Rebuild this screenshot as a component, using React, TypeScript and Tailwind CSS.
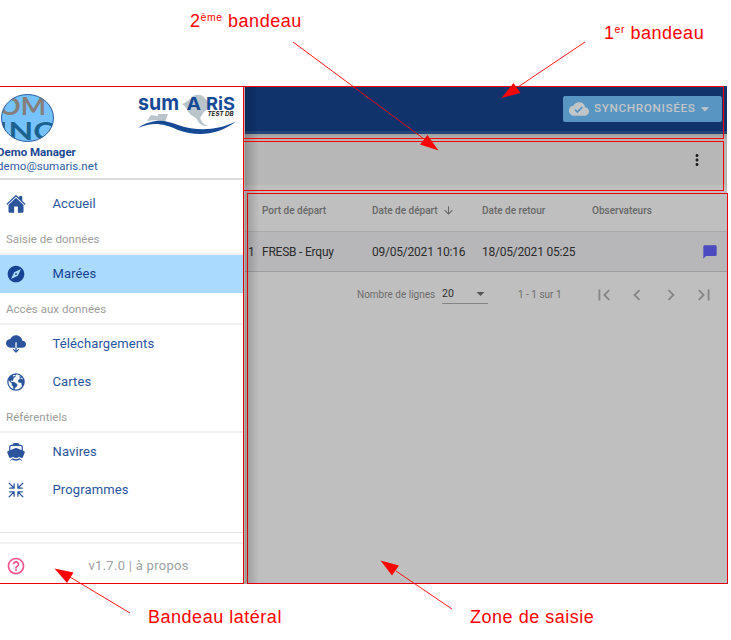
import type { ReactNode } from 'react';
import { IoHome, IoCloudDownload, IoEarth, IoBoat, IoContract } from 'react-icons/io5';
import {
  MdExplore, MdHelpOutline, MdCloudDone, MdArrowDropDown, MdMoreVert, MdArrowDownward,
  MdChatBubble, MdFirstPage, MdLastPage, MdChevronLeft, MdChevronRight,
} from 'react-icons/md';

function Item({ icon, label, active = false }: { icon: ReactNode; label: string; active?: boolean }) {
  return (
    <div className={`flex h-[38px] shrink-0 items-center pl-1.5 text-[20px] ${active ? 'bg-[#abdaff] text-[#164393]' : 'text-[#2a559d]'}`}>
      <span className="flex w-[46.5px]">{icon}</span>
      <span className="text-[13px] tracking-[0.12px]">{label}</span>
    </div>
  );
}

function Section({ label }: { label: string }) {
  return (
    <div className="flex h-8 shrink-0 items-center border-b-2 border-[#f1f1f1] pl-1.5 pt-[3px] text-[11.5px] tracking-[0.04px] text-[#9d9d9d]">
      {label}
    </div>
  );
}

function Avatar() {
  return (
    <svg width="56" height="52" viewBox="0 0 56 52" className="block overflow-visible">
      <defs><clipPath id="face"><ellipse cx="27.500" cy="26" rx="26" ry="23.5" /></clipPath></defs>
      <ellipse cx="27.500" cy="26" rx="26" ry="23.5" fill="#75c2ff" />
      <g clipPath="url(#face)" fontFamily="Lato, sans-serif" fontWeight="700" fontSize="25.500">
        <text x="-1" y="23" textLength="47" lengthAdjust="spacingAndGlyphs" fill="#857f7b">OM</text>
        <text x="8.500" y="47.500" textLength="46" lengthAdjust="spacingAndGlyphs" fill="#1b628f">NC</text>
        <path d="M2 30H5V46H2Z" fill="#31658a" />
      </g>
      <ellipse cx="27.500" cy="26" rx="26" ry="23.5" fill="none" stroke="#2a5b9c" />
    </svg>
  );
}

function Logo() {
  return (
    <svg width="100" height="42" viewBox="0 0 100 42" className="block overflow-visible">
      <path d="M44 12Q51 9 55 4Q61 1 66 5Q69 10 75 13Q71 15 66 20Q63 24 62 26Q65 34 70 33Q64 37 58 26Q50 22 49 17Q47 14 44 12Z" fill="#b9c5ca" />
      <path d="M9 29L13 23L20 24V22H30L27 30L18 28Z" fill="#b9c5ca" />
      <g fontFamily="Inter, sans-serif" fontWeight="700" fill="#164a96">
        <text x="0" y="17.500" fontSize="22" textLength="41" lengthAdjust="spacingAndGlyphs">sum</text>
        <text x="48.500" y="17.500" fontSize="17.500" textLength="14.500" lengthAdjust="spacingAndGlyphs">A</text>
        <text x="68" y="17.500" fontSize="17.500" textLength="29" lengthAdjust="spacingAndGlyphs">RiS</text>
      </g>
      <text x="69.500" y="24" fontFamily="Inter, sans-serif" fontWeight="700" fontStyle="italic" fontSize="6" fill="#222" textLength="26" lengthAdjust="spacingAndGlyphs">TEST DB</text>
      <path d="M0 36C16 26 26 28 40 33C61 40 80 38 98 29.500C80 43 60 45 40 38C24 31 15 30 0 36Z" fill="#164a96" />
    </svg>
  );
}

function Sidebar() {
  return (
    <aside className="flex w-[244px] shrink-0 flex-col bg-white">
      <header className="h-[94px] shrink-0 border-b-2 border-[#dcdcdc] pt-1.5">
        <div className="flex h-[53px] items-start justify-between pr-1.5">
          <Avatar />
          <Logo />
        </div>
        <div className="-ml-[3px] text-[11.5px] leading-[14px] text-[#1c4791]">
          <div className="font-bold">Demo Manager</div>
          <div className="tracking-[0.04px] text-[#2f5ca3]">demo@sumaris.net</div>
        </div>
      </header>
      <nav className="flex flex-1 flex-col pt-[5px]">
        <Item icon={<IoHome />} label="Accueil" />
        <Section label="Saisie de données" />
        <Item icon={<MdExplore />} label="Marées" active />
        <Section label="Accès aux données" />
        <Item icon={<IoCloudDownload />} label="Téléchargements" />
        <Item icon={<IoEarth />} label="Cartes" />
        <Section label="Référentiels" />
        <Item icon={<IoBoat />} label="Navires" />
        <Item icon={<IoContract />} label="Programmes" />
      </nav>
      <footer className="h-[52px] shrink-0 border-t border-[#e2e2e2] pt-[9px]">
        <div className="flex h-[42px] items-center border-t-2 border-[#f1f1f1] pl-1.5 pt-[3px]">
          <MdHelpOutline className="text-[20px] text-[#f9508c]" />
          <span className="ml-[62.5px] text-[13px] tracking-[0.28px] text-[#9d9fa3]">v1.7.0 | à propos</span>
        </div>
      </footer>
    </aside>
  );
}

function Main() {
  return (
    <main className="flex w-[482px] shrink-0 flex-col bg-[#bfbfbf]">
      <header className="flex h-12 shrink-0 items-center justify-end border-b-[3px] border-[#244579] bg-[#10336c] pr-[5px]">
        <button className="flex h-[26px] w-[159px] items-center rounded-[2px] bg-[#5895c3] pl-1.5 text-[#c2c5c8]">
          <MdCloudDone className="shrink-0 text-[20px]" />
          <span className="ml-[5px] text-[11.8px] font-medium tracking-[0.6px]">SYNCHRONISÉES</span>
          <MdArrowDropDown className="shrink-0 text-[20px]" />
        </button>
      </header>
      <div className="flex h-[51px] shrink-0 items-center justify-end bg-[#b7b7b7] pr-[21px] shadow-[inset_0_4px_4px_-2px_#999]">
        <MdMoreVert className="text-[18px] text-[#202020]" />
      </div>
      <div className="grid h-[47px] shrink-0 grid-cols-[110px_110px_110px_1fr] items-center border-b border-[#a9a9a9] pl-[17px] pt-[5px] text-[10px] font-medium text-[#686868]">
        <span>Port de départ</span>
        <span className="flex items-center">Date de départ<MdArrowDownward className="ml-1 text-[13px]" stroke="currentColor" /></span>
        <span>Date de retour</span>
        <span>Observateurs</span>
      </div>
      <div className="flex h-10 shrink-0 items-center border-b border-[#9d9d9d] bg-[#b7b7ba] pl-[3px] text-[12px] tracking-[-0.22px] text-[#2b2b2b]">
        <span className="w-3.5">1</span>
        <span className="w-[110px]">FRESB - Erquy</span>
        <span className="w-[110px]">09/05/2021 10:16</span>
        <span>18/05/2021 05:25</span>
        <MdChatBubble className="ml-auto mr-[9px] text-[16px] text-[#4b4abf]" />
      </div>
      <div className="flex h-11 items-center pl-[112px] text-[10px] text-[#6d6d6d]">
        <span className="w-[85px]">Nombre de lignes</span>
        <span className="flex h-[19px] w-[46px] items-center justify-between border-b border-[#858585] text-[10.5px] text-[#303030]">20<MdArrowDropDown className="-mr-0.5 text-[19px] text-[#555]" /></span>
        <span className="ml-[30px] w-[75px]">1 - 1 sur 1</span>
        <div className="flex gap-[11.3px] pt-0.5 text-[22px] text-[#858585]">
          <MdFirstPage /><MdChevronLeft /><MdChevronRight /><MdLastPage />
        </div>
      </div>
    </main>
  );
}

function Annotations() {
  return (
    <div className="pointer-events-none absolute inset-0 font-['Liberation_Sans',sans-serif] text-[18px] leading-5 tracking-[0.52px] text-[#ff0000]">
      <div className="absolute left-[-2px] top-[86px] h-[498px] w-[246px] border border-[#e60000]" />
      <div className="absolute left-[243px] top-[86px] h-[53px] w-[481px] border border-[#f00]" />
      <div className="absolute left-[243px] top-[141px] h-[50px] w-[481px] border border-[#f00]" />
      <div className="absolute left-[247px] top-[193px] h-[391px] w-[481px] border border-[#e60000]" />
      <svg width="731" height="640" className="absolute inset-0" fill="#f00">
        <path d="M293 42L424 139M585 42L518 87M130 613L70 577M452 609L396 571" fill="none" stroke="#f00" strokeWidth="0.9" />
        <path d="M438.500 150.500L420 144.500L427.500 135ZM501.500 98L513.500 83L520.500 93ZM54.500 568.500L73.500 572.500L67 583ZM380.500 560.500L399 565.500L392 575.500Z" />
      </svg>
      <div className="absolute left-[190px] top-[11px] whitespace-nowrap">2<span className="relative -top-[6px] text-[10.5px]">ème</span> bandeau</div>
      <div className="absolute left-[604px] top-[23px] whitespace-nowrap">1<span className="relative -top-[6px] text-[10.5px]">er</span> bandeau</div>
      <div className="absolute left-[148px] top-[607px] whitespace-nowrap">Bandeau latéral</div>
      <div className="absolute left-[470px] top-[607px] whitespace-nowrap">Zone de saisie</div>
    </div>
  );
}

export default function App() {
  return (
    <div className="relative h-[640px] w-[731px] overflow-hidden bg-white pt-[86px] font-[Roboto,sans-serif]">
      <div className="flex h-[498px] w-[727px]">
        <Sidebar />
        <div className="w-px shrink-0 bg-[#b0b0b0]" />
        <div className="relative flex">
          <Main />
          <div className="absolute inset-y-0 left-0 w-3.5 bg-gradient-to-r from-black/20 to-transparent" />
        </div>
      </div>
      <Annotations />
    </div>
  );
}
